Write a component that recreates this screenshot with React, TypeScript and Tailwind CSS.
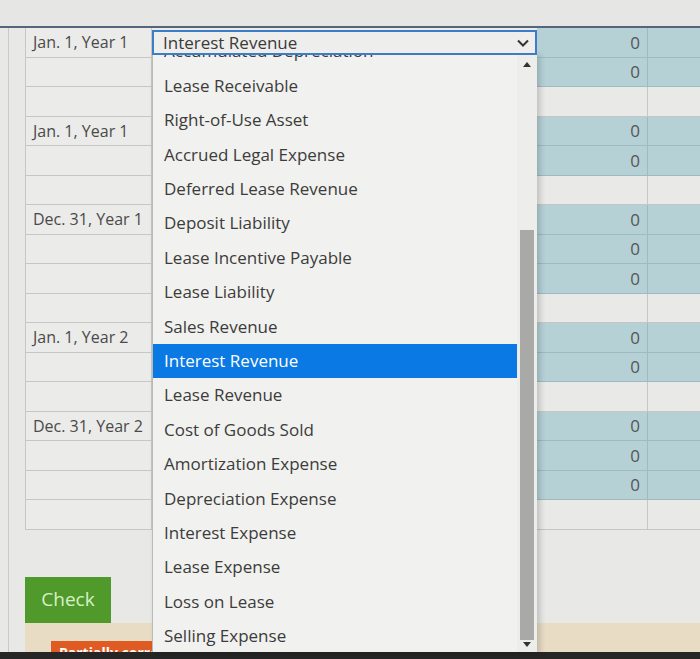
const rows: { date?: string; teal: boolean }[] = [
  { date: "Jan. 1, Year 1", teal: true },
  { teal: true },
  { teal: false },
  { date: "Jan. 1, Year 1", teal: true },
  { teal: true },
  { teal: false },
  { date: "Dec. 31, Year 1", teal: true },
  { teal: true },
  { teal: true },
  { teal: false },
  { date: "Jan. 1, Year 2", teal: true },
  { teal: true },
  { teal: false },
  { date: "Dec. 31, Year 2", teal: true },
  { teal: true },
  { teal: true },
  { teal: false },
];

const options = [
  "Accumulated Depreciation",
  "Lease Receivable",
  "Right-of-Use Asset",
  "Accrued Legal Expense",
  "Deferred Lease Revenue",
  "Deposit Liability",
  "Lease Incentive Payable",
  "Lease Liability",
  "Sales Revenue",
  "Interest Revenue",
  "Lease Revenue",
  "Cost of Goods Sold",
  "Amortization Expense",
  "Depreciation Expense",
  "Interest Expense",
  "Lease Expense",
  "Loss on Lease",
  "Selling Expense",
];

export default function App() {
  return (
    <div
      className="relative w-[700px] h-[659px] overflow-hidden bg-[#e8e8e6] text-[#444]"
      style={{ fontFamily: '"Open Sans", "Noto Sans", sans-serif' }}
    >
      {/* header strip */}
      <div className="h-[28px] bg-[#e6e6e4] border-b-2 border-[#56657a]" />

      <div className="flex">
        <div className="w-[25px] shrink-0 pl-[8px]">
          <div className="h-full border-l border-[#cacac8]" />
        </div>
        <div className="flex-1">
          {rows.map((r, i) => (
            <div key={i} className="grid grid-cols-[127px_385px_111px_1fr] h-[29.5px]">
              <div className="flex items-center pl-[7px] bg-[#ebebe9] border-b border-r border-l border-[#c6c6c4] text-[16px] text-[#4a4a4a] whitespace-nowrap">
                {r.date}
              </div>
              <div className="bg-[#ebebe9] border-b border-[#c6c6c4] flex items-start">
                {i === 0 && (
                  <div className="relative z-20 w-full h-[25px] mt-[2px] border-2 border-[#3d7cc9] bg-[#eeeeec] flex items-center justify-between pl-[9px] pr-[6px] text-[17px] text-[#3a3a3a]">
                    <span>Interest Revenue</span>
                    <svg viewBox="0 0 12 8" className="w-[12px] h-[8px]" fill="none" stroke="#333" strokeWidth={2}>
                      <polyline points="1 1.5 6 6.5 11 1.5" />
                    </svg>
                  </div>
                )}
              </div>
              <div
                className={
                  r.teal
                    ? "bg-[#b5d1d6] border-b border-r border-[#9ebbc0] flex items-center justify-end pr-[7px] text-[17px] text-[#555]"
                    : "bg-[#e9e9e7] border-b border-r border-[#c6c6c4]"
                }
              >
                {r.teal && "0"}
              </div>
              <div
                className={
                  r.teal ? "bg-[#b5d1d6] border-b border-[#9ebbc0]" : "bg-[#e9e9e7] border-b border-[#c6c6c4]"
                }
              />
            </div>
          ))}

          <div className="h-[47px]" />
          <button className="w-[86px] h-[46px] bg-[#4f9a2b] text-[#d9f0c6] text-[19px] flex items-center justify-center">
            Check
          </button>
          <div className="h-[29px] bg-[#e9dcc4] flex flex-col justify-end pl-[26px]">
            <div className="w-[104px] h-[11px] bg-[#e05a24] overflow-hidden text-white font-bold text-[14px] leading-[24px] pl-[8px] whitespace-nowrap">
              Partially correct
            </div>
          </div>
        </div>
      </div>
      <div className="h-[8px] bg-[#262626]" />

      {/* open dropdown */}
      <div className="absolute z-10 left-[152px] top-[53px] w-[385px] h-[599px] bg-[#f1f1ef] border-l border-[#b9b9b7] shadow-[3px_2px_6px_rgba(0,0,0,0.18)] flex overflow-hidden">
        <div className="flex-1 -mt-[19px]">
          {options.map((o, i) => (
            <div
              key={i}
              className={
                i === 9
                  ? "h-[34.4px] flex items-center pl-[11px] text-[17px] bg-[#0a79e4] text-white whitespace-nowrap"
                  : "h-[34.4px] flex items-center pl-[11px] text-[17px] text-[#3c3c3c] whitespace-nowrap"
              }
            >
              {o}
            </div>
          ))}
        </div>
        <div className="w-[20px] bg-[#ededeb] flex flex-col items-center pt-[9px]">
          <svg viewBox="0 0 8 5" className="w-[8px] h-[5px]" fill="#333">
            <polygon points="0 5 4 0 8 5" />
          </svg>
          <div className="w-[14px] h-[410px] mt-[163px] bg-[#a9a9a7]" />
          <svg viewBox="0 0 8 5" className="w-[8px] h-[5px] mt-[2px]" fill="#333">
            <polygon points="0 0 8 0 4 5" />
          </svg>
        </div>
      </div>
    </div>
  );
}
